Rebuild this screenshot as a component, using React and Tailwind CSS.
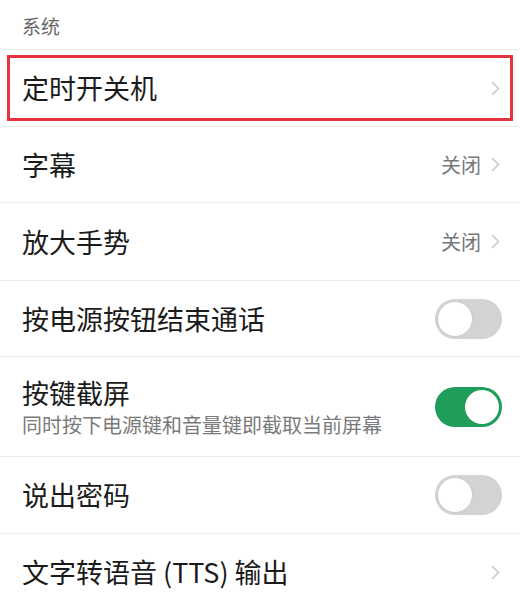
import React from "react";

const font = { fontFamily: '"Noto Sans CJK SC", "Noto Sans", sans-serif' };

function Chevron() {
  return (
    <svg width="9" height="15" viewBox="0 0 9 15" fill="none" className="shrink-0">
      <path d="M1.5 1.5 L7.5 7.5 L1.5 13.5" stroke="#c8c8c8" strokeWidth="1.6" strokeLinecap="round" strokeLinejoin="round" />
    </svg>
  );
}

function Toggle({ on }) {
  if (on) {
    return (
      <div className="w-[67px] h-[40px] rounded-full bg-[#1f9d5b] flex items-center justify-end p-[3px] shrink-0">
        <div className="w-[34px] h-[34px] rounded-full bg-white" />
      </div>
    );
  }
  return (
    <div className="w-[67px] h-[40px] rounded-full bg-[#d3d3d3] flex items-center p-[2px] shrink-0">
      <div className="w-[36px] h-[36px] rounded-full bg-white border border-[#c8c8c8]" />
    </div>
  );
}

function Row({ title, sub, value, chevron, toggle, height = "h-[77px]" }) {
  return (
    <div className={`${height} flex items-center border-b border-[#ececec] pl-[22px] pr-[18px]`}>
      <div className="flex-1 min-w-0">
        <div className="text-[27px] leading-[34px] text-[#1b1b1b]">{title}</div>
        {sub && <div className="text-[20px] leading-[26px] text-[#7a7a7a] mt-[2px]">{sub}</div>}
      </div>
      {value && <span className="text-[20px] text-[#777] mr-[10px]">{value}</span>}
      {chevron && <div className="pr-[2px]"><Chevron /></div>}
      {toggle !== undefined && <Toggle on={toggle} />}
    </div>
  );
}

export default function App() {
  return (
    <div className="w-[520px] h-[602px] overflow-hidden bg-white" style={font}>
      {/* Section header */}
      <div className="h-[50px] flex items-center pl-[22px] pt-[4px] border-b border-[#ececec]">
        <span className="text-[19px] text-[#666]">系统</span>
      </div>

      {/* Highlighted row */}
      <div className="h-[77px] border-b border-[#ececec] px-[7px] py-[5px]">
        <div className="h-full border-[3px] border-[#e8353d] flex items-center pl-[12px] pr-[10px]">
          <div className="flex-1 text-[27px] leading-[34px] text-[#1b1b1b]">定时开关机</div>
          <Chevron />
        </div>
      </div>

      <Row title="字幕" value="关闭" chevron height="h-[76px]" />
      <Row title="放大手势" value="关闭" chevron height="h-[78px]" />
      <Row title="按电源按钮结束通话" toggle={false} height="h-[76px]" />
      <Row title="按键截屏" sub="同时按下电源键和音量键即截取当前屏幕" toggle={true} height="h-[100px]" />
      <Row title="说出密码" toggle={false} />
      <Row title="文字转语音 (TTS) 输出" chevron />
    </div>
  );
}
